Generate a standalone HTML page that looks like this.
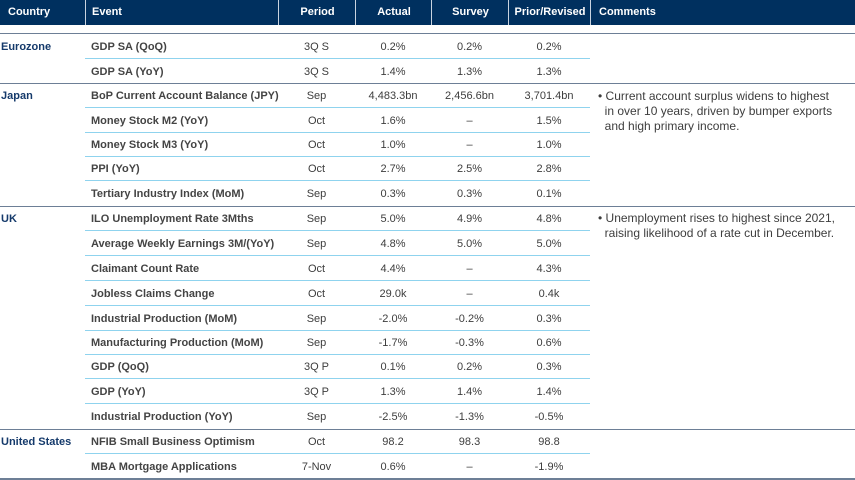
<!DOCTYPE html><html><head><style>
body{margin:0;width:855px;height:480px;background:#fff;font-family:"Liberation Sans",sans-serif;font-size:11px;color:#3d3d3d;position:relative;overflow:hidden}
.h{position:absolute;top:0;left:0;width:855px;height:25px;background:#00305f}
.h div{position:absolute;top:0;height:25px;line-height:25px;color:#fff;font-weight:bold;font-size:11px;border-left:1px solid #c8d3e0}
.c{position:absolute;height:24px;line-height:24px;white-space:nowrap}
.ln{position:absolute;height:1px}
.g{left:0;width:855px;background:#6d7f96}
.s{left:85px;width:505px;background:#8fd3ee}
.cty{color:#153a6b;font-weight:bold;left:1px}
.ev{left:91px;font-weight:bold;color:#444}
.n{text-align:center}
.cm{position:absolute;left:598px;width:257px;line-height:15px;color:#3d3d3d;font-size:12px;white-space:nowrap}
</style></head><body>
<div class="h">
<div style="left:0;width:85px;border:none;padding-left:8px;box-sizing:border-box">Country</div>
<div style="left:85px;width:193px;padding-left:6px;box-sizing:border-box">Event</div>
<div style="left:278px;width:77px;text-align:center">Period</div>
<div style="left:355px;width:76px;text-align:center">Actual</div>
<div style="left:431px;width:77px;text-align:center">Survey</div>
<div style="left:508px;width:82px;text-align:center">Prior/Revised</div>
<div style="left:590px;width:265px;padding-left:8px;box-sizing:border-box">Comments</div>
</div>
<div class="ln g" style="top:33px"></div>
<div class="ln g" style="top:83px"></div>
<div class="ln g" style="top:206px"></div>
<div class="ln g" style="top:429px"></div>
<div class="ln g" style="top:478px;height:2px"></div>
<div id="rows"></div>
<div class="c cty" style="top:35px">Eurozone</div>
<div class="c cty" style="top:84px">Japan</div>
<div class="c cty" style="top:207px">UK</div>
<div class="c cty" style="top:430px">United States</div>
<div class="cm" style="top:89px">• Current account surplus widens to highest<br>&nbsp;&nbsp;in over 10 years, driven by bumper exports<br>&nbsp;&nbsp;and high primary income.</div>
<div class="cm" style="top:211px">• Unemployment rises to highest since 2021,<br>&nbsp;&nbsp;raising likelihood of a rate cut in December.</div>
<script>
var R=[
[35,"GDP SA (QoQ)","3Q S","0.2%","0.2%","0.2%",1],
[60,"GDP SA (YoY)","3Q S","1.4%","1.3%","1.3%",0],
[84,"BoP Current Account Balance (JPY)","Sep","4,483.3bn","2,456.6bn","3,701.4bn",1],
[109,"Money Stock M2 (YoY)","Oct","1.6%","–","1.5%",1],
[133,"Money Stock M3 (YoY)","Oct","1.0%","–","1.0%",1],
[157,"PPI (YoY)","Oct","2.7%","2.5%","2.8%",1],
[182,"Tertiary Industry Index (MoM)","Sep","0.3%","0.3%","0.1%",0],
[207,"ILO Unemployment Rate 3Mths","Sep","5.0%","4.9%","4.8%",1],
[232,"Average Weekly Earnings 3M/(YoY)","Sep","4.8%","5.0%","5.0%",1],
[257,"Claimant Count Rate","Oct","4.4%","–","4.3%",1],
[282,"Jobless Claims Change","Oct","29.0k","–","0.4k",1],
[307,"Industrial Production (MoM)","Sep","-2.0%","-0.2%","0.3%",1],
[331,"Manufacturing Production (MoM)","Sep","-1.7%","-0.3%","0.6%",1],
[355,"GDP (QoQ)","3Q P","0.1%","0.2%","0.3%",1],
[380,"GDP (YoY)","3Q P","1.3%","1.4%","1.4%",1],
[405,"Industrial Production (YoY)","Sep","-2.5%","-1.3%","-0.5%",0],
[430,"NFIB Small Business Optimism","Oct","98.2","98.3","98.8",1],
[455,"MBA Mortgage Applications","7-Nov","0.6%","–","-1.9%",0]];
var X=[[278,77],[355,76],[431,77],[508,82]],h="";
R.forEach(function(r){h+='<div class="c ev" style="top:'+r[0]+'px">'+r[1]+'</div>';
for(var i=0;i<4;i++)h+='<div class="c n" style="top:'+r[0]+'px;left:'+X[i][0]+'px;width:'+X[i][1]+'px">'+r[i+2]+'</div>';
if(r[6])h+='<div class="ln s" style="top:'+(r[0]+23)+'px"></div>';});
document.getElementById("rows").innerHTML=h;
</script>
</body></html>
